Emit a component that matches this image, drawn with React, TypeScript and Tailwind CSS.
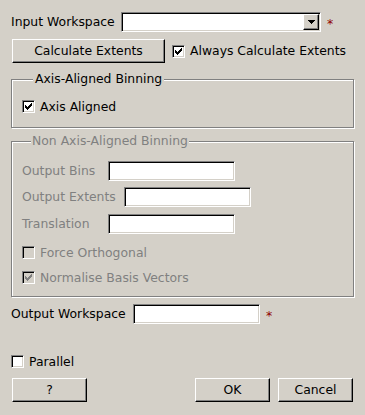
import type { ReactNode } from 'react';

const sunken =
  'border border-t-[#808080] border-l-[#808080] border-b-white border-r-white shadow-[inset_1px_1px_0_#000,inset_-1px_-1px_0_#d4d0c8]';
const raised =
  'border border-t-white border-l-white border-b-black border-r-black shadow-[inset_-1px_-1px_0_#808080]';
const etched =
  'border border-[#808080] shadow-[inset_1px_1px_0_#fff,1px_1px_0_#fff]';

const TICK = [
  '......X',
  '.....XX',
  'X...XXX',
  'XX.XXX.',
  'XXXXX..',
  '.XXX...',
  '..X....',
];

function CheckBox({ checked, disabled }: { checked?: boolean; disabled?: boolean }) {
  return (
    <span
      className={`relative block w-[13px] h-[13px] shrink-0 ${sunken} ${disabled ? 'bg-[#d4d0c8]' : 'bg-white'}`}
    >
      {checked && (
        <svg
          className="absolute left-[2px] top-[2px]"
          width="7"
          height="7"
          viewBox="0 0 7 7"
          shapeRendering="crispEdges"
        >
          {TICK.flatMap((row, y) =>
            row.split('').map((c, x) =>
              c === 'X' ? (
                <rect key={`${x}-${y}`} x={x} y={y} width="1" height="1" fill={disabled ? '#808080' : '#000'} />
              ) : null
            )
          )}
        </svg>
      )}
    </span>
  );
}

function Check({ label, checked, disabled, className = '' }: { label: string; checked?: boolean; disabled?: boolean; className?: string }) {
  return (
    <div className={`flex items-center h-[13px] ${className}`}>
      <CheckBox checked={checked} disabled={disabled} />
      <span className={`ml-[5px] leading-[14px] whitespace-nowrap ${disabled ? 'text-[#808080]' : ''}`}>{label}</span>
    </div>
  );
}

function Button({ children, className = '' }: { children: ReactNode; className?: string }) {
  return (
    <div className={`h-[24px] flex items-center justify-center bg-[#d4d0c8] ${raised} ${className}`}>
      {children}
    </div>
  );
}

function TextBox({ className = '' }: { className?: string }) {
  return <div className={`h-[20px] w-[127px] bg-white ${sunken} ${className}`} />;
}

function Group({ title, disabled, titleClass, children, className = '' }: { title: string; disabled?: boolean; titleClass: string; children: ReactNode; className?: string }) {
  return (
    <fieldset className={`mx-[11px] w-[343px] ${etched} ${className}`}>
      <legend className={`bg-[#d4d0c8] leading-[14px] ${titleClass} ${disabled ? 'text-[#808080]' : ''}`}>{title}</legend>
      {children}
    </fieldset>
  );
}

function FieldRow({ label, labelWidth, className = '' }: { label: string; labelWidth: string; className?: string }) {
  return (
    <div className={`flex items-center h-[20px] ${className}`}>
      <span className={`text-[#808080] whitespace-nowrap ${labelWidth}`}>{label}</span>
      <TextBox />
    </div>
  );
}

function Required() {
  return <span className="ml-[6px] mt-[4px] text-[#900000] leading-none">*</span>;
}

export default function App() {
  return (
    <div className="w-[365px] h-[415px] bg-[#d4d0c8] text-black text-[12.4px] font-['DejaVu_Sans',sans-serif] pt-[12px] overflow-hidden">
      <div className="flex items-center h-[20px] pl-[11px]">
        <span className="w-[110px] whitespace-nowrap">Input Workspace</span>
        <div className={`relative w-[200px] h-[20px] bg-white ${sunken}`}>
          <div className={`absolute right-[1px] top-[1px] w-[16px] h-[16px] bg-[#d4d0c8] flex items-center justify-center ${raised}`}>
            <svg width="7" height="4" viewBox="0 0 7 4" shapeRendering="crispEdges">
              <path d="M0 0h7v1h-1v1h-1v1h-1v1h-1v-1h-1v-1h-1v-1h-1z" fill="#000" />
            </svg>
          </div>
        </div>
        <Required />
      </div>

      <div className="flex items-center mt-[7px] pl-[12px]">
        <Button className="w-[153px]">Calculate Extents</Button>
        <Check label="Always Calculate Extents" checked className="ml-[7px]" />
      </div>

      <Group title="Axis-Aligned Binning" titleClass="ml-[11px] px-[2px]" className="mt-[9px] pl-[10px] pt-[14px] pb-[14px]">
        <Check label="Axis Aligned" checked />
      </Group>

      <Group title="Non Axis-Aligned Binning" disabled titleClass="ml-[9px] px-[1px]" className="mt-[6px] pl-[10px] pt-[13px] pb-[12px]">
        <FieldRow label="Output Bins" labelWidth="w-[86px]" />
        <FieldRow label="Output Extents" labelWidth="w-[102px]" className="mt-[6px]" />
        <FieldRow label="Translation" labelWidth="w-[86px]" className="mt-[7px]" />
        <Check label="Force Orthogonal" disabled className="mt-[12px]" />
        <Check label="Normalise Basis Vectors" checked disabled className="mt-[12px]" />
      </Group>

      <div className="flex items-center h-[20px] mt-[7px] pl-[11px]">
        <span className="w-[122px] whitespace-nowrap">Output Workspace</span>
        <TextBox />
        <Required />
      </div>

      <Check label="Parallel" className="mt-[31px] ml-[11px]" />

      <div className="flex mt-[10px] px-[12px]">
        <Button className="w-[75px]">?</Button>
        <div className="flex-1" />
        <Button className="w-[75px]">OK</Button>
        <Button className="w-[75px] ml-[8px]">Cancel</Button>
      </div>
    </div>
  );
}
